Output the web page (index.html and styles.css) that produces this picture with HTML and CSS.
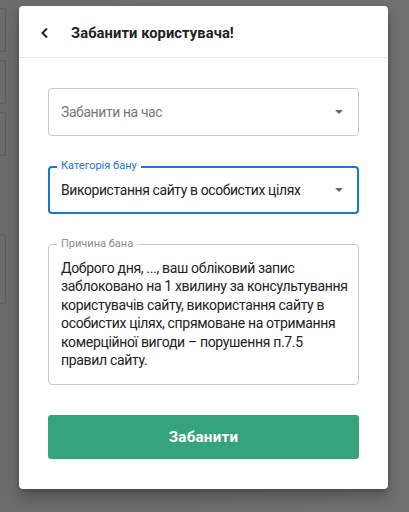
FILE: index.html
```html
<!DOCTYPE html>
<html lang="uk">
<head>
<meta charset="utf-8">
<link rel="stylesheet" href="styles.css">
</head>
<body>
<div class="backdrop">
  <div class="bg-cards">
    <div class="bg-card c1"></div>
    <div class="bg-card c2"></div>
    <div class="bg-card c3"></div>
    <div class="bg-card c4"></div>
  </div>
  <div class="modal">
    <div class="modal-head">
      <svg class="back" width="10" height="12" viewBox="0 0 10 12"><path d="M7 1.5 L2.5 6 L7 10.5" fill="none" stroke="#222" stroke-width="2"/></svg>
      <span class="title">Забанити користувача!</span>
    </div>
    <div class="modal-body">
      <div class="field">
        <div class="select-val placeholder">Забанити на час</div>
        <span class="caret"></span>
      </div>
      <div class="field focused">
        <span class="legend">Категорія бану</span>
        <div class="select-val">Використання сайту в особистих цілях</div>
        <span class="caret"></span>
      </div>
      <div class="field area">
        <span class="legend grey">Причина бана</span>
        <div class="area-text">Доброго дня, ..., ваш обліковий запис заблоковано на 1 хвилину за консультування користувачів сайту, використання сайту в особистих цілях, спрямоване на отримання комерційної вигоди – порушення п.7.5 правил сайту.</div>
      </div>
      <button class="submit">Забанити</button>
    </div>
  </div>
</div>
</body>
</html>
```
FILE: styles.css
```css
* { box-sizing: border-box; }
html, body { margin: 0; padding: 0; }
body {
  font-family: Roboto, "Noto Sans", sans-serif;
  width: 409px;
  height: 512px;
  overflow: hidden;
}
.backdrop {
  position: relative;
  width: 409px;
  height: 512px;
  background: linear-gradient(90deg, #6c6c6c 0%, #6e6e6e 60%, #717171 100%);
  padding: 6px 21px 0 19px;
}
.bg-cards {
  position: absolute;
  left: -10px;
  top: 8px;
  width: 16px;
  display: flex;
  flex-direction: column;
  gap: 8px;
}
.bg-card {
  border: 1px solid #5d5d5d;
  border-radius: 3px;
  height: 44px;
}
.bg-card.c4 { margin-top: 70px; height: 70px; }
.modal {
  position: relative;
  background: #fff;
  border-radius: 4px;
  width: 369px;
  height: 483px;
  box-shadow: 0 8px 14px rgba(0,0,0,0.25), 0 2px 4px rgba(0,0,0,0.15);
  display: flex;
  flex-direction: column;
}
.modal-head {
  height: 52px;
  border-bottom: 1px solid #e8e8e8;
  display: flex;
  align-items: center;
  padding-left: 21px;
  padding-top: 2px;
}
.back { margin-right: 21px; }
.title {
  font-weight: 700;
  font-size: 14.7px;
  color: #222;
  letter-spacing: 0.1px;
}
.modal-body {
  padding: 30px 29px 0 29px;
  display: flex;
  flex-direction: column;
}
.field {
  position: relative;
  height: 48px;
  border: 1px solid #c8c8c8;
  border-radius: 4px;
  display: flex;
  align-items: center;
  padding: 0 12px;
  margin-bottom: 30px;
}
.field.focused {
  border: 2px solid #1976d2;
  padding: 0 11px;
}
.select-val {
  font-size: 13.9px;
  letter-spacing: -0.36px;
  color: #222;
  flex: 1;
}
.select-val.placeholder { color: #777; }
.caret {
  width: 0; height: 0;
  border-left: 4px solid transparent;
  border-right: 4px solid transparent;
  border-top: 4px solid #666;
  margin-right: 3px;
}
.legend {
  position: absolute;
  top: -8px;
  left: 8px;
  background: #fff;
  padding: 0 4px;
  font-size: 11px;
  line-height: 13px;
  color: #1976d2;
}
.focused .legend { top: -9px; left: 7px; }
.legend.grey { color: #8a8a8a; }
.field.area {
  height: 141px;
  align-items: flex-start;
  padding: 14px 8px 0 12px;
}
.area-text {
  font-size: 14px;
  letter-spacing: -0.33px;
  line-height: 18.4px;
  color: #222;
}
.submit {
  height: 44px;
  border: none;
  border-radius: 3px;
  background: #35a47b;
  color: #fff;
  font-family: Roboto, sans-serif;
  font-weight: 700;
  font-size: 15.2px;
  letter-spacing: 0.2px;
}
```
